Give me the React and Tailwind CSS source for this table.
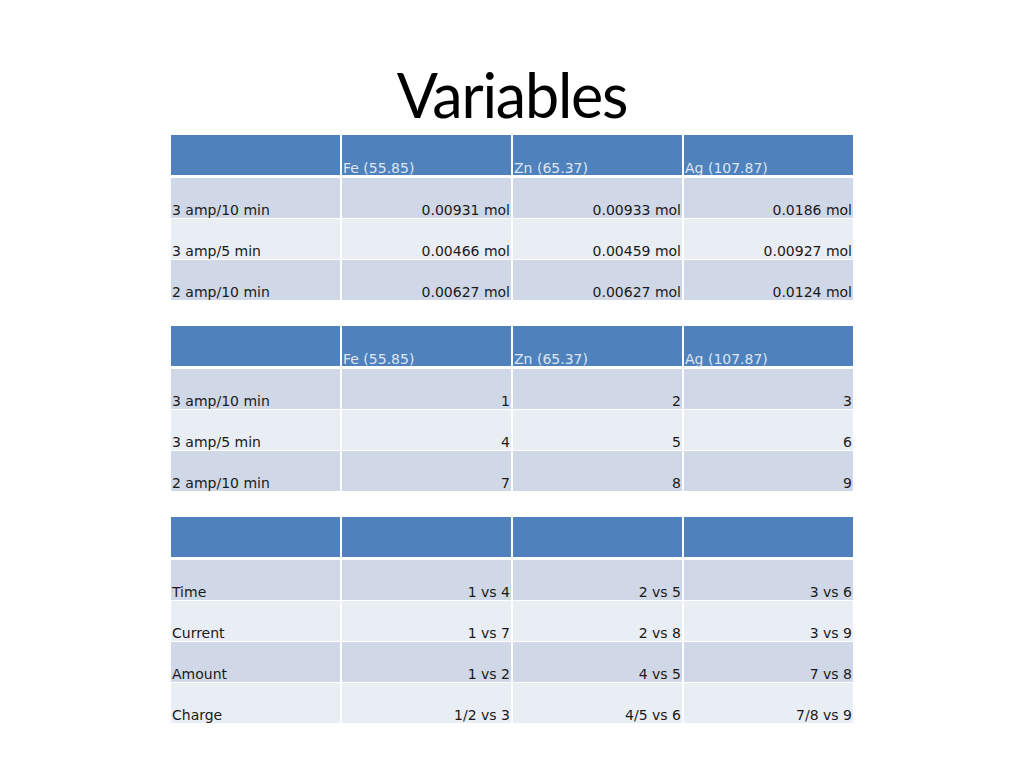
import React from "react";

const font = { fontFamily: '"DejaVu Sans", Verdana, sans-serif' };

function Table({ headers, rows }) {
  return (
    <div className="w-[682px] flex flex-col" style={font}>
      <div className="grid grid-cols-4 gap-x-[2px] h-[40px]">
        {headers.map((h, i) => (
          <div key={i} className="bg-[#4f81bd] flex items-end text-[14px] leading-none text-[#dce6f2] pl-[1px] pb-0">
            {h}
          </div>
        ))}
      </div>
      <div className="flex flex-col gap-y-[1px] mt-[3px]">
        {rows.map((r, ri) => (
          <div key={ri} className="grid grid-cols-4 gap-x-[2px] h-[40px]">
            {r.map((c, ci) => (
              <div
                key={ci}
                className={
                  (ri % 2 === 0 ? "bg-[#d0d8e8] " : "bg-[#e9edf4] ") +
                  "flex items-end text-[14px] leading-none text-[#1a1a1a] pb-[1px] px-[1px] " +
                  (ci === 0 ? "justify-start" : "justify-end")
                }
              >
                {c}
              </div>
            ))}
          </div>
        ))}
      </div>
    </div>
  );
}

export default function App() {
  const h = ["", "Fe (55.85)", "Zn (65.37)", "Ag (107.87)"];
  return (
    <div className="w-[1024px] h-[768px] bg-white flex flex-col items-center">
      <div
        className="mt-[64px] h-[71px] text-[61px] leading-none text-black"
        style={{ fontFamily: 'Lato, "Open Sans", sans-serif', letterSpacing: "-1.2px" }}
      >
        Variables
      </div>
      <div className="flex flex-col gap-y-[26px]">
        <Table
          headers={h}
          rows={[
            ["3 amp/10 min", "0.00931 mol", "0.00933 mol", "0.0186 mol"],
            ["3 amp/5 min", "0.00466 mol", "0.00459 mol", "0.00927 mol"],
            ["2 amp/10 min", "0.00627 mol", "0.00627 mol", "0.0124 mol"],
          ]}
        />
        <Table
          headers={h}
          rows={[
            ["3 amp/10 min", "1", "2", "3"],
            ["3 amp/5 min", "4", "5", "6"],
            ["2 amp/10 min", "7", "8", "9"],
          ]}
        />
        <Table
          headers={["", "", "", ""]}
          rows={[
            ["Time", "1 vs 4", "2 vs 5", "3 vs 6"],
            ["Current", "1 vs 7", "2 vs 8", "3 vs 9"],
            ["Amount", "1 vs 2", "4 vs 5", "7 vs 8"],
            ["Charge", "1/2 vs 3", "4/5 vs 6", "7/8 vs 9"],
          ]}
        />
      </div>
    </div>
  );
}
